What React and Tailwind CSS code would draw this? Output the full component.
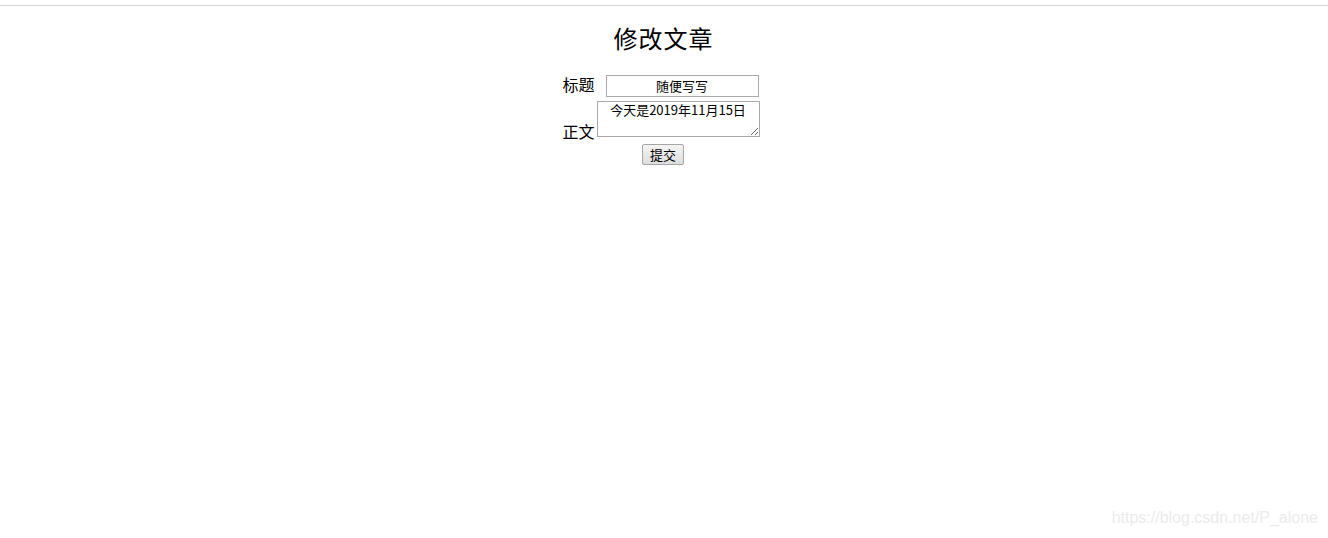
export default function App() {
  return (
    <div className="w-[1328px] h-[538px] bg-white relative overflow-hidden" style={{ fontFamily: '"Noto Sans CJK SC", "Noto Sans", sans-serif' }}>
      <div className="pt-[5px]">
        <div className="h-px bg-[#d4d4d4]" />
      </div>
      <div className="flex flex-col items-center">
        <h2 className="mt-[16px] ml-[-1px] text-[24px] leading-[32px] font-normal text-black tracking-[1px]">修改文章</h2>
        <form className="mt-[21px] ml-[-6px] flex flex-col items-center" onSubmit={(e) => e.preventDefault()}>
          <div className="flex items-start ml-[-1px]">
            <span className="text-[16px] leading-[20px] text-black w-[33px] mt-[-1px]">标题</span>
            <input
              defaultValue="随便写写"
              className="ml-[10px] w-[153px] h-[22px] border border-[#a9a9a9] text-center text-[13px] leading-[18px] pb-[2px] text-black outline-none"
            />
          </div>
          <div className="flex items-end mt-[4px]">
            <span className="text-[16px] leading-[20px] text-black w-[33px] mb-[-4px]">正文</span>
            <textarea
              defaultValue="今天是2019年11月15日"
              className="ml-px w-[163px] h-[36px] border border-[#a9a9a9] text-center text-[13px] leading-[16px] text-black pt-0 outline-none block"
            />
          </div>
          <button
            type="submit"
            className="mt-[7px] ml-[4px] w-[42px] h-[21px] border border-[#a6a6a6] rounded-[2px] bg-gradient-to-b from-[#f4f4f4] to-[#dedede] text-[13px] leading-[19px] text-black"
          >
            提交
          </button>
        </form>
      </div>
      <div className="absolute right-[10px] bottom-[8px] text-[16px] text-[#ebebeb]" style={{ fontFamily: '"Liberation Sans", Arial, sans-serif' }}>
        https://blog.csdn.net/P_alone
      </div>
    </div>
  );
}
